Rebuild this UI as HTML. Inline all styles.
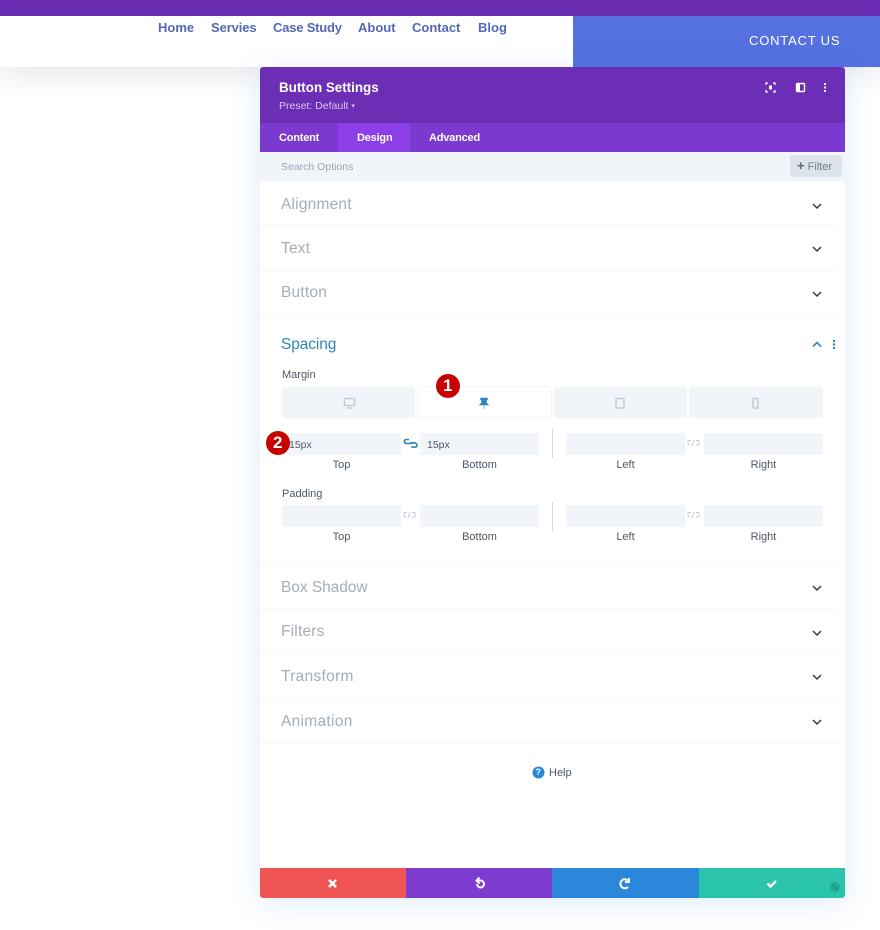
<!DOCTYPE html>
<html><head><meta charset="utf-8"><style>
*{box-sizing:border-box}
html,body{margin:0;padding:0}
body{width:880px;height:930px;position:relative;overflow:hidden;background:#fff;font-family:"Liberation Sans",sans-serif}
.a{position:absolute;white-space:nowrap}
.nav{top:20px;font-size:13px;font-weight:700;color:#5468b8;line-height:15px}
.sec{left:281px;font-size:15.5px;color:#a3aeb8;line-height:20px;letter-spacing:.2px}
.line{left:260px;width:585px;height:1px;background:#f6f8fa}
.lab{font-size:11px;color:#4c5866;line-height:14px}
.c{text-align:center}
.f{height:22px;background:#f1f4f9;border-radius:2px}
.tab{top:387px;height:31px;background:#f1f4f9;border-radius:3px}
.val{font-size:10.5px;color:#4c5866;line-height:14px}
.t{top:131px;font-size:11px;font-weight:700;line-height:14px;color:#fff;letter-spacing:-.2px}
svg{position:absolute;overflow:visible}
</style></head><body>
<div class="a" style="left:0;top:0;width:880px;height:16px;background:#6c2eb5"></div>
<div class="a" style="left:0;top:16px;width:880px;height:51px;background:#fff;box-shadow:0 6px 30px rgba(40,50,90,.13)"></div>
<div class="a" style="left:573px;top:16px;width:307px;height:51px;background:#5570e0"></div>
<div class="a nav" style="left:158px">Home</div>
<div class="a nav" style="left:211px;letter-spacing:-.1px">Servies</div>
<div class="a nav" style="left:273px;letter-spacing:-.2px">Case Study</div>
<div class="a nav" style="left:358px">About</div>
<div class="a nav" style="left:412px">Contact</div>
<div class="a nav" style="left:478px">Blog</div>
<div class="a" style="left:749px;top:33px;font-size:13px;line-height:16px;color:#fff;letter-spacing:.8px">CONTACT US</div>

<div class="a" style="left:260px;top:67px;width:585px;height:831px;background:#fff;border-radius:3px;box-shadow:0 5px 30px rgba(43,135,218,.16)"></div>
<div class="a" style="left:260px;top:67px;width:585px;height:56px;background:#6c2eb5;border-radius:3px 3px 0 0"></div>
<div class="a" style="left:279px;top:79px;font-size:13.4px;font-weight:700;line-height:17px;color:#fff">Button Settings</div>
<div class="a" style="left:279px;top:100px;font-size:10.5px;line-height:13px;color:#d9c8f0">Preset: Default <span style="font-size:7px;vertical-align:1px">▾</span></div>
<svg style="left:0;top:0" width="880" height="930" fill="none">
<g stroke="#fff" stroke-width="1.2"><path d="M766 85v-2h2M773 83h2v2M775 90v2h-2M768 92h-2v-2"/></g><rect x="769" y="85.5" width="3" height="4" fill="#fff"/>
<rect x="796.5" y="83.5" width="8" height="8" rx="1" stroke="#fff" stroke-width="1.4"/><rect x="797" y="84" width="3" height="7" fill="#fff"/>
<g fill="#fff"><circle cx="825" cy="84" r="1.1"/><circle cx="825" cy="87.5" r="1.1"/><circle cx="825" cy="91" r="1.1"/></g>
</svg>
<div class="a" style="left:260px;top:123px;width:585px;height:29px;background:#7b39cf"></div>
<div class="a" style="left:338px;top:123px;width:72px;height:29px;background:#8c3fe6"></div>
<div class="a t" style="left:279px">Content</div>
<div class="a t" style="left:357px">Design</div>
<div class="a t" style="left:429px">Advanced</div>
<div class="a" style="left:260px;top:152px;width:585px;height:29px;background:#f1f4f9"></div>
<div class="a" style="left:281px;top:160px;font-size:10.5px;line-height:14px;color:#9aa6b2">Search Options</div>
<div class="a" style="left:790px;top:155px;width:52px;height:22px;background:#dde3ea;border-radius:3px"></div>
<div class="a" style="left:797px;top:159px;font-size:11px;line-height:14px;color:#6e7c8a"><b style="font-size:13px;line-height:13px;color:#5c6976">+</b> Filter</div>

<div class="a sec" style="top:195px">Alignment</div><div class="a line" style="top:225px"></div>
<div class="a sec" style="top:239px">Text</div><div class="a line" style="top:270px"></div>
<div class="a sec" style="top:283px">Button</div><div class="a line" style="top:314px"></div>
<div class="a sec" style="top:335px;color:#2d85b5;letter-spacing:-.1px">Spacing</div>
<div class="a lab" style="left:282px;top:368px">Margin</div>

<div class="a tab" style="left:282px;width:133px"></div>
<div class="a" style="left:417px;top:386px;width:135px;height:32px;background:#fff;border:1px solid #f1f4f9;border-radius:3px"></div>
<div class="a tab" style="left:554px;width:133px"></div>
<div class="a tab" style="left:689px;width:134px"></div>

<div class="a f" style="left:282px;top:433px;width:119px"></div>
<div class="a f" style="left:420px;top:433px;width:119px"></div>
<div class="a f" style="left:566px;top:433px;width:119px"></div>
<div class="a f" style="left:704px;top:433px;width:119px"></div>
<div class="a val" style="left:289px;top:438px">15px</div>
<div class="a val" style="left:427px;top:438px">15px</div>
<div class="a lab c" style="left:282px;top:458px;width:119px">Top</div>
<div class="a lab c" style="left:420px;top:458px;width:119px">Bottom</div>
<div class="a lab c" style="left:566px;top:458px;width:119px">Left</div>
<div class="a lab c" style="left:704px;top:458px;width:119px">Right</div>
<div class="a" style="left:552px;top:429px;width:1px;height:29px;background:#d5dae0"></div>

<div class="a lab" style="left:282px;top:487px">Padding</div>
<div class="a f" style="left:282px;top:505px;width:119px"></div>
<div class="a f" style="left:420px;top:505px;width:119px"></div>
<div class="a f" style="left:566px;top:505px;width:119px"></div>
<div class="a f" style="left:704px;top:505px;width:119px"></div>
<div class="a lab c" style="left:282px;top:530px;width:119px">Top</div>
<div class="a lab c" style="left:420px;top:530px;width:119px">Bottom</div>
<div class="a lab c" style="left:566px;top:530px;width:119px">Left</div>
<div class="a lab c" style="left:704px;top:530px;width:119px">Right</div>
<div class="a" style="left:552px;top:502px;width:1px;height:29px;background:#d5dae0"></div>

<div class="a line" style="top:564px"></div>
<div class="a sec" style="top:578px;letter-spacing:-.05px">Box Shadow</div><div class="a line" style="top:609px"></div>
<div class="a sec" style="top:622px">Filters</div><div class="a line" style="top:653px"></div>
<div class="a sec" style="top:667px;letter-spacing:.3px">Transform</div><div class="a line" style="top:698px"></div>
<div class="a sec" style="top:712px;letter-spacing:.3px">Animation</div><div class="a line" style="top:743px"></div>

<svg style="left:0;top:0" width="880" height="930" fill="none">
<g stroke="#2f3d4a" stroke-width="1.5"><path d="M813 204l4 4 4-4M813 247l4 4 4-4M813 292l4 4 4-4M813 586l4 4 4-4M813 631l4 4 4-4M813 675l4 4 4-4M813 720l4 4 4-4"/></g>
<path d="M813 346.5l4-4 4 4" stroke="#2d85b5" stroke-width="1.6"/>
<g fill="#2d85b5"><circle cx="834" cy="341" r="1.2"/><circle cx="834" cy="344.5" r="1.2"/><circle cx="834" cy="348" r="1.2"/></g>
<rect x="344.5" y="398.5" width="10" height="7" rx=".5" stroke="#c3cbd4" stroke-width="1.5"/><path d="M347 408h5" stroke="#c3cbd4" stroke-width="1.5"/>
<path d="M480.500 398h7v1.500l-1 .5v3l2 2h-9l2-2v-3l-1-.5zM484 405v4" fill="#2d85c8" stroke="#2d85c8" stroke-width=".6"/>
<rect x="616" y="398.500" width="8" height="9.500" rx="1" stroke="#c3cbd4" stroke-width="1.500"/>
<rect x="753" y="398.500" width="5" height="9.500" rx="1" stroke="#c3cbd4" stroke-width="1.500"/>
<g stroke="#2d85b5" stroke-width="1.600"><path d="M409 439.500h-3a2 2 0 0 0-1 3.500l1 .5h5.500M411 447h3a2 2 0 0 0 2-3.500l-1-.7h-5"/></g>
<g stroke="#c3cbd4" stroke-width="1"><path d="M691 440.500h-2a1 1 0 0 0-1 1v2.500a1 1 0 0 0 1 1h1.500M692 446l2-6M696 440.500h2a1 1 0 0 1 1 1v2.500a1 1 0 0 1-1 1h-2"/><path transform="translate(0,72)" d="M691 440.500h-2a1 1 0 0 0-1 1v2.500a1 1 0 0 0 1 1h1.500M692 446l2-6M696 440.500h2a1 1 0 0 1 1 1v2.500a1 1 0 0 1-1 1h-2"/><path transform="translate(-284,72)" d="M691 440.500h-2a1 1 0 0 0-1 1v2.500a1 1 0 0 0 1 1h1.500M692 446l2-6M696 440.500h2a1 1 0 0 1 1 1v2.500a1 1 0 0 1-1 1h-2"/></g>
<circle cx="538.500" cy="772.500" r="6" fill="#2b87da"/>
<circle cx="448" cy="386" r="12" fill="#c70000"/>
<circle cx="278" cy="443" r="12" fill="#c70000"/>
</svg>
<div class="a" style="left:448px;top:376px;width:0;font-size:17px;font-weight:700;line-height:20px;color:#fff;text-indent:-5px">1</div>
<div class="a" style="left:278px;top:433px;width:0;font-size:17px;font-weight:700;line-height:20px;color:#fff;text-indent:-5px">2</div>
<div class="a" style="left:535.500px;top:767px;font-size:9px;font-weight:700;line-height:11px;color:#fff">?</div>
<div class="a lab" style="left:549px;top:766px">Help</div>

<div class="a" style="left:260px;top:868px;width:146px;height:30px;background:#ef5555;border-radius:0 0 0 3px"></div>
<div class="a" style="left:406px;top:868px;width:146px;height:30px;background:#7d3bcf"></div>
<div class="a" style="left:552px;top:868px;width:147px;height:30px;background:#2b87da"></div>
<div class="a" style="left:699px;top:868px;width:146px;height:30px;background:#29c4a9;border-radius:0 0 3px 0"></div>
<svg style="left:0;top:0" width="880" height="930" fill="none">
<path d="M329 880l7 7M336 880l-7 7" stroke="#fff" stroke-width="2.6"/>
<path d="M477 880.500h3.500a3.500 3.500 0 1 1-3.500 3.500M479.500 877.500l-3 3 3 3" stroke="#fff" stroke-width="2"/>
<path d="M628 880.500a4.500 4.500 0 1 0 0 6.500M629 878v4h-4" stroke="#fff" stroke-width="2"/>
<path d="M767.500 883.500l3 3 5.500-5.500" stroke="#fff" stroke-width="2.400"/>
<circle cx="835" cy="887" r="5" fill="#25ab94"/><path d="M832 884l6 6" stroke="#1f9480" stroke-width="1.500"/>
</svg>
</body></html>
